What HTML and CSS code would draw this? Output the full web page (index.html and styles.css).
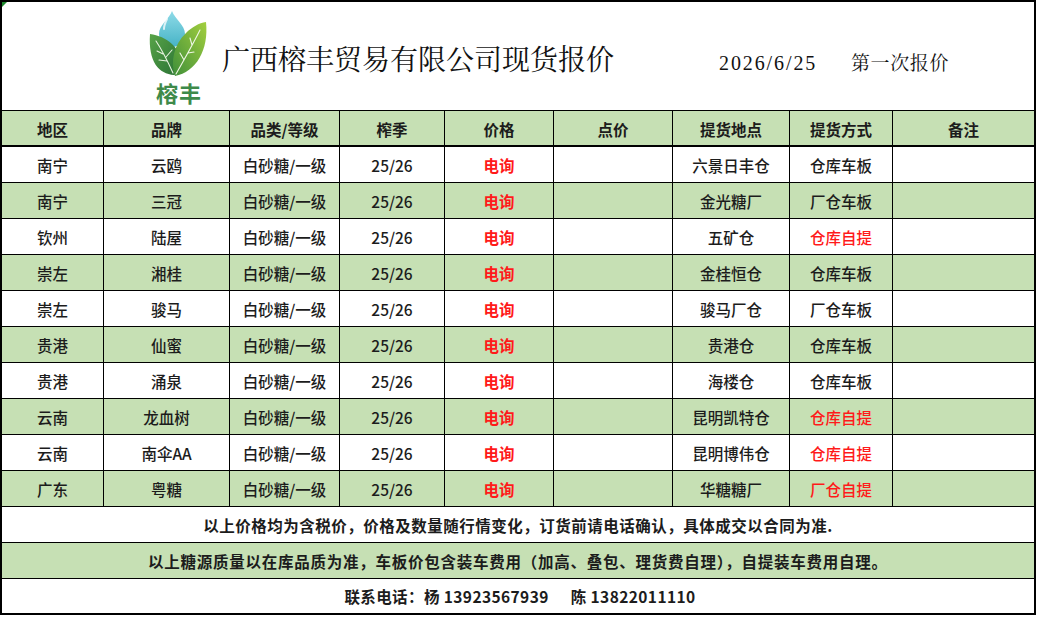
FILE: index.html
```html
<!DOCTYPE html>
<html lang="zh-CN">
<head>
<meta charset="utf-8">
<title>广西榕丰贸易有限公司现货报价</title>
<link rel="stylesheet" href="styles.css">
</head>
<body>
<div class="sheet">
  <span class="corner-mark"></span>
  <header class="title-bar">
    <div class="logo">
      <svg class="logo-mark" viewBox="0 0 62 70" width="62" height="70" aria-hidden="true">
        <defs>
          <linearGradient id="drop" x1="0" y1="0" x2="0" y2="1">
            <stop offset="0" stop-color="#8fdbe8"/>
            <stop offset="1" stop-color="#46b3c6"/>
          </linearGradient>
          <linearGradient id="leafL" x1="0" y1="0" x2="1" y2="1">
            <stop offset="0" stop-color="#58a448"/>
            <stop offset="1" stop-color="#2a7235"/>
          </linearGradient>
          <linearGradient id="leafR" x1="1" y1="0" x2="0" y2="1">
            <stop offset="0" stop-color="#a3cf3e"/>
            <stop offset="1" stop-color="#3f8f3a"/>
          </linearGradient>
        </defs>
        <path d="M24 1 C27 9 37 15 37 24 A13 13 0 0 1 11 24 C11 15 21 9 24 1 Z" fill="url(#drop)"/>
        <path d="M19 9 C17 13 16 16 16 19" stroke="#ffffff" stroke-opacity="0.75" stroke-width="2" fill="none" stroke-linecap="round"/>
        <path d="M2 24 C18 26 35 38 31 55 C30 61 28 65 26 65 C11 64 0 52 2 24 Z" fill="url(#leafL)"/>
        <path d="M25 63 C20 52 14 40 8 31 M15 44 L9 41 M19 51 L11 50 M18 47 L24 40" stroke="#e8f3e0" stroke-width="1.1" fill="none" stroke-linecap="round"/>
        <path d="M58 12 C61 40 48 62 27 66 C22 52 26 34 38 23 C44 17 51 13 58 12 Z" fill="url(#leafR)"/>
        <path d="M28 64 C36 50 44 36 52 20 M36 50 L32 43 M40 43 L46 42 M44 35 L42 28" stroke="#eef6e4" stroke-width="1.1" fill="none" stroke-linecap="round"/>
      </svg>
      <span class="logo-name">榕丰</span>
    </div>
    <h1 class="company">广西榕丰贸易有限公司现货报价</h1>
    <div class="date">2026/6/25</div>
    <div class="round">第一次报价</div>
  </header>

  <div class="grid">
    <div class="cell head">地区</div>
    <div class="cell head">品牌</div>
    <div class="cell head">品类/等级</div>
    <div class="cell head">榨季</div>
    <div class="cell head">价格</div>
    <div class="cell head">点价</div>
    <div class="cell head">提货地点</div>
    <div class="cell head">提货方式</div>
    <div class="cell head last">备注</div>

    <div class="cell">南宁</div><div class="cell">云鸥</div><div class="cell">白砂糖/一级</div><div class="cell">25/26</div><div class="cell price">电询</div><div class="cell"></div><div class="cell">六景日丰仓</div><div class="cell">仓库车板</div><div class="cell last"></div>

    <div class="cell alt">南宁</div><div class="cell alt">三冠</div><div class="cell alt">白砂糖/一级</div><div class="cell alt">25/26</div><div class="cell alt price">电询</div><div class="cell alt"></div><div class="cell alt">金光糖厂</div><div class="cell alt">厂仓车板</div><div class="cell alt last"></div>

    <div class="cell">钦州</div><div class="cell">陆屋</div><div class="cell">白砂糖/一级</div><div class="cell">25/26</div><div class="cell price">电询</div><div class="cell"></div><div class="cell">五矿仓</div><div class="cell self">仓库自提</div><div class="cell last"></div>

    <div class="cell alt">崇左</div><div class="cell alt">湘桂</div><div class="cell alt">白砂糖/一级</div><div class="cell alt">25/26</div><div class="cell alt price">电询</div><div class="cell alt"></div><div class="cell alt">金桂恒仓</div><div class="cell alt">仓库车板</div><div class="cell alt last"></div>

    <div class="cell">崇左</div><div class="cell">骏马</div><div class="cell">白砂糖/一级</div><div class="cell">25/26</div><div class="cell price">电询</div><div class="cell"></div><div class="cell">骏马厂仓</div><div class="cell">厂仓车板</div><div class="cell last"></div>

    <div class="cell alt">贵港</div><div class="cell alt">仙蜜</div><div class="cell alt">白砂糖/一级</div><div class="cell alt">25/26</div><div class="cell alt price">电询</div><div class="cell alt"></div><div class="cell alt">贵港仓</div><div class="cell alt">仓库车板</div><div class="cell alt last"></div>

    <div class="cell">贵港</div><div class="cell">涌泉</div><div class="cell">白砂糖/一级</div><div class="cell">25/26</div><div class="cell price">电询</div><div class="cell"></div><div class="cell">海楼仓</div><div class="cell">仓库车板</div><div class="cell last"></div>

    <div class="cell alt">云南</div><div class="cell alt">龙血树</div><div class="cell alt">白砂糖/一级</div><div class="cell alt">25/26</div><div class="cell alt price">电询</div><div class="cell alt"></div><div class="cell alt">昆明凯特仓</div><div class="cell alt self">仓库自提</div><div class="cell alt last"></div>

    <div class="cell">云南</div><div class="cell">南伞AA</div><div class="cell">白砂糖/一级</div><div class="cell">25/26</div><div class="cell price">电询</div><div class="cell"></div><div class="cell">昆明博伟仓</div><div class="cell self">仓库自提</div><div class="cell last"></div>

    <div class="cell alt">广东</div><div class="cell alt">粤糖</div><div class="cell alt">白砂糖/一级</div><div class="cell alt">25/26</div><div class="cell alt price">电询</div><div class="cell alt"></div><div class="cell alt">华糖糖厂</div><div class="cell alt self">厂仓自提</div><div class="cell alt last"></div>
  </div>

  <div class="note">以上价格均为含税价，价格及数量随行情变化，订货前请电话确认，具体成交以合同为准.</div>
  <div class="note alt">以上糖源质量以在库品质为准，车板价包含装车费用（加高、叠包、理货费自理），自提装车费用自理。</div>
  <div class="note contact">联系电话：杨 13923567939<span class="gap"></span>陈 13822011110</div>
</div>
</body>
</html>
```

FILE: styles.css
```css
* {
  box-sizing: border-box;
}

html, body {
  margin: 0;
  padding: 0;
  background: #ffffff;
}

body {
  font-family: "Noto Sans CJK SC", "Noto Sans", sans-serif;
  color: #1c1c1c;
}

.sheet {
  position: relative;
  width: 1036px;
  border: 2px solid #000;
  background: #ffffff;
}

.corner-mark {
  position: absolute;
  left: 0;
  top: 0;
  width: 0;
  height: 0;
  border-top: 5px solid #1f8a2e;
  border-right: 5px solid transparent;
}

.title-bar {
  height: 109px;
  border-bottom: 1px solid #000;
  display: flex;
  align-items: flex-start;
  padding-left: 146px;
}

.logo {
  width: 62px;
  margin-top: 8px;
  display: flex;
  flex-direction: column;
  align-items: center;
}

.logo-mark {
  display: block;
}

.logo-name {
  font-size: 22px;
  line-height: 24px;
  font-weight: 700;
  color: #3e8a4a;
  letter-spacing: 1px;
}

.company {
  margin: 41px 0 0 12px;
  width: 497px;
  font-family: "Noto Serif CJK SC", "Noto Sans CJK SC", serif;
  font-weight: 400;
  font-size: 28px;
  line-height: 30px;
  color: #111;
  letter-spacing: 0;
}

.date {
  margin-top: 50px;
  width: 132px;
  font-family: "Liberation Serif", serif;
  font-size: 20px;
  line-height: 22px;
  letter-spacing: 1.9px;
  color: #111;
}

.round {
  margin-top: 49px;
  font-family: "Noto Serif CJK SC", "Noto Sans CJK SC", serif;
  font-size: 19px;
  line-height: 22px;
  letter-spacing: 0.6px;
  color: #111;
}

.grid {
  display: grid;
  grid-template-columns: 102px 126px 110px 105px 109px 119px 117px 103px 141px;
  grid-auto-rows: 36px;
}

.cell {
  display: flex;
  align-items: center;
  justify-content: center;
  border-right: 1px solid #000;
  border-bottom: 1px solid #000;
  font-size: 15.5px;
  font-weight: 500;
  color: #1c1c1c;
  background: #ffffff;
  white-space: nowrap;
}

.cell.last {
  border-right: none;
}

.cell.alt {
  background: #c6e0b4;
}

.cell.head {
  background: #c6e0b4;
  font-weight: 700;
  height: 36px;
  border-bottom: 2px solid #000;
  padding-top: 1px;
}

.cell.price {
  color: #ff1a1a;
  font-weight: 700;
}

.cell.self {
  color: #ff1a1a;
}

.note {
  height: 36px;
  border-bottom: 1px solid #000;
  display: flex;
  align-items: center;
  justify-content: center;
  font-size: 15.5px;
  font-weight: 700;
  color: #1c1c1c;
  background: #ffffff;
  letter-spacing: 0.5px;
}

.note.alt {
  background: #c6e0b4;
  letter-spacing: 0.75px;
}

.note.contact {
  height: 34px;
  border-bottom: none;
  padding-left: 4px;
  letter-spacing: 0.4px;
}

.gap {
  display: inline-block;
  width: 22px;
}
```
